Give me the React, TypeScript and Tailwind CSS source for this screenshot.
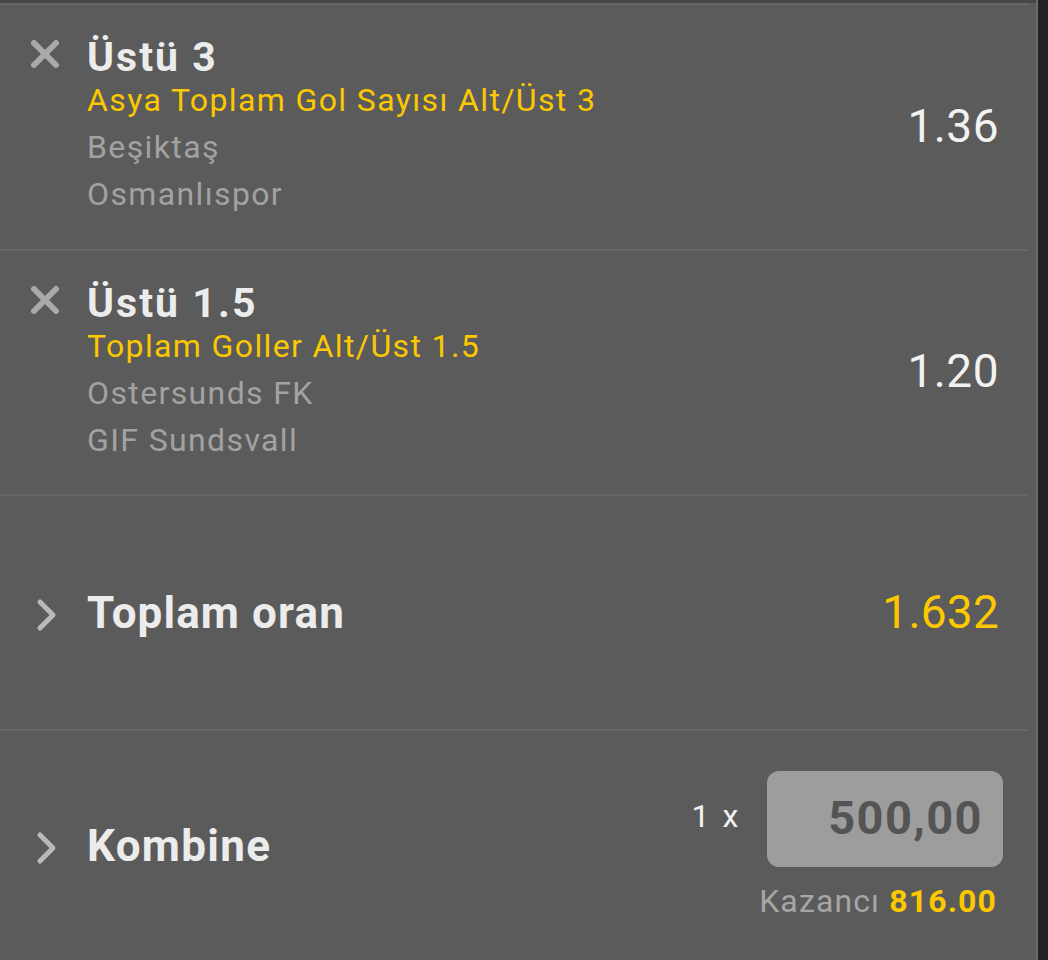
import React from "react";

const font = { fontFamily: "Roboto, 'Noto Sans', sans-serif" };

function XIcon() {
  return (
    <svg width="34" height="34" viewBox="0 0 34 34" className="block">
      <path d="M6 6 L28 28 M28 6 L6 28" stroke="#a9a9a9" strokeWidth="6" strokeLinecap="round" fill="none" />
    </svg>
  );
}

function Chevron() {
  return (
    <svg width="24" height="34" viewBox="0 0 24 34" className="block">
      <path d="M5 4 L18 17 L5 30" stroke="#b9b9b9" strokeWidth="5" strokeLinecap="round" strokeLinejoin="round" fill="none" />
    </svg>
  );
}

function Separator() {
  return <div className="h-[2px] bg-[#676767] mr-[8px]" />;
}

function BetRow({ title, market, home, away, odd, h }: { title: string; market: string; home: string; away: string; odd: string; h: string }) {
  return (
    <div className={`flex items-center ${h} pr-[37px]`}>
      <div className="w-[87px] self-start pt-[32px] pl-[28px]">
        <XIcon />
      </div>
      <div className="flex-1 flex flex-col self-start mt-[29px]">
        <div className="text-[41px] leading-[46px] font-bold text-[#ececec] tracking-[0.05em]">{title}</div>
        <div className="text-[32px] leading-[47px] text-[#fcc800] tracking-[0.043em] -mt-[3px]">{market}</div>
        <div className="text-[32px] leading-[47px] text-[#a2a2a2] tracking-[0.043em]">{home}</div>
        <div className="text-[32px] leading-[47px] text-[#a2a2a2] tracking-[0.043em]">{away}</div>
      </div>
      <div className="text-[46px] font-normal text-[#f2f2f2] tracking-[0.01em] -mt-[2px]">{odd}</div>
    </div>
  );
}

export default function App() {
  return (
    <div className="w-[1048px] h-[960px] flex bg-[#222222] overflow-hidden" style={font}>
      <div className="w-[1038px] h-full bg-[#5b5b5b] flex flex-col border-r-2 border-[#6a6a6a]">
        <div className="h-[3px] bg-[#464646]" />
        <div className="h-[2px] bg-[#676767] mr-[8px]" />
        <BetRow h="h-[244px]" title="Üstü 3" market="Asya Toplam Gol Sayısı Alt/Üst 3" home="Beşiktaş" away="Osmanlıspor" odd="1.36" />
        <Separator />
        <BetRow h="h-[243px]" title="Üstü 1.5" market="Toplam Goller Alt/Üst 1.5" home="Ostersunds FK" away="GIF Sundsvall" odd="1.20" />
        <Separator />
        <div className="flex items-center h-[233px] pr-[37px]">
          <div className="w-[87px] pl-[35px] pt-[4px]">
            <Chevron />
          </div>
          <div className="flex-1 text-[44px] font-bold text-[#ececec] tracking-[0.025em]">Toplam oran</div>
          <div className="text-[46px] font-normal text-[#fcc800] tracking-[0.005em]">1.632</div>
        </div>
        <Separator />
        <div className="flex items-center flex-1 pr-[33px]">
          <div className="w-[87px] pl-[35px] pt-[4px]">
            <Chevron />
          </div>
          <div className="flex-1 text-[44px] font-bold text-[#ececec] tracking-[0.03em]">Kombine</div>
          <div className="flex flex-col items-end">
            <div className="flex items-center gap-[26px]">
              <div className="text-[32px] text-[#f2f2f2] tracking-[0.08em] -mt-[6px]">1 x</div>
              <div className="w-[236px] h-[96px] rounded-[12px] bg-[#9d9d9d] flex items-center justify-end pr-[20px]">
                <span className="text-[47px] font-bold text-[#545454] tracking-[0.03em]">500,00</span>
              </div>
            </div>
            <div className="mt-[14px] mr-[6px] text-[32px] leading-[40px] tracking-[0.035em]">
              <span className="text-[#a6a6a6]">Kazancı </span>
              <span className="text-[#fcc800] font-bold">816.00</span>
            </div>
          </div>
        </div>
      </div>
    </div>
  );
}
